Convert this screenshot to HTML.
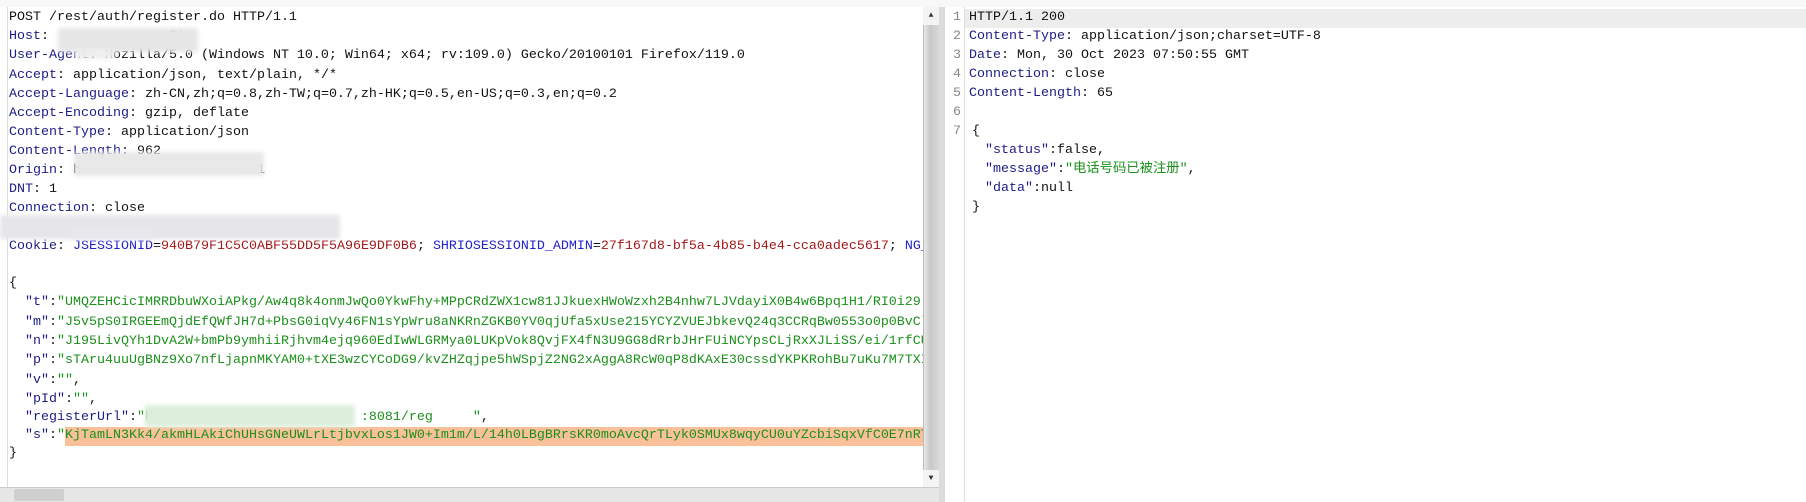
<!DOCTYPE html>
<html><head><meta charset="utf-8"><style>
*{margin:0;padding:0;box-sizing:border-box}
body{width:1806px;height:502px;background:#fff;position:relative;overflow:hidden;font-family:"Liberation Mono","Noto Sans CJK SC",monospace;font-size:13.33px;color:#111}
.l{position:absolute;white-space:pre;line-height:19px;height:19px}
.n{color:#1c1c86}.b{color:#2222cc}.r{color:#a31818}.g{color:#1c901c}
.blur{position:absolute;background:#e4e4e4;filter:blur(2px)}
.ln{position:absolute;color:#888;line-height:19px;width:10px;text-align:right}
</style></head><body>
<div style="position:absolute;left:0;top:0;width:1806px;height:7px;background:#f8f8f8"></div>
<!-- left pane -->
<div style="position:absolute;left:0;top:7px;width:923px;height:480px;overflow:hidden;background:#fff">
<div style="position:absolute;left:7px;top:0;width:1px;height:480px;background:#ddd"></div>
<div style="position:absolute;left:65px;top:420px;width:900px;height:19px;background:#f9c09a"></div>
<div style="position:absolute;left:0;top:-7px">
<div class="l" style="left:9px;top:8px">POST /rest/auth/register.do HTTP/1.1</div>
<div class="l" style="left:9px;top:27px"><span class="n">Host</span>:              :81</div>
<div class="l" style="left:9px;top:46px"><span class="n">User-Agent</span>: Mozilla/5.0 (Windows NT 10.0; Win64; x64; rv:109.0) Gecko/20100101 Firefox/119.0</div>
<div class="l" style="left:9px;top:66px"><span class="n">Accept</span>: application/json, text/plain, */*</div>
<div class="l" style="left:9px;top:85px"><span class="n">Accept-Language</span>: zh-CN,zh;q=0.8,zh-TW;q=0.7,zh-HK;q=0.5,en-US;q=0.3,en;q=0.2</div>
<div class="l" style="left:9px;top:104px"><span class="n">Accept-Encoding</span>: gzip, deflate</div>
<div class="l" style="left:9px;top:123px"><span class="n">Content-Type</span>: application/json</div>
<div class="l" style="left:9px;top:142px"><span class="n">Content-Length</span>: 962</div>
<div class="l" style="left:9px;top:161px"><span class="n">Origin</span>: h                    :81</div>
<div class="l" style="left:9px;top:180px"><span class="n">DNT</span>: 1</div>
<div class="l" style="left:9px;top:199px"><span class="n">Connection</span>: close</div>
<div class="l" style="left:9px;top:237px"><span class="n">Cookie</span>: <span class="b">JSESSIONID</span>=<span class="r">940B79F1C5C0ABF55DD5F5A96E9DF0B6</span>; <span class="b">SHRIOSESSIONID_ADMIN</span>=<span class="r">27f167d8-bf5a-4b85-b4e4-cca0adec5617</span>; <span class="b">NG_</span></div>
<div class="l" style="left:9px;top:274px">{</div>
<div class="l" style="left:9px;top:293px">  <span class="n">"t"</span>:<span class="g">"UMQZEHCicIMRRDbuWXoiAPkg/Aw4q8k4onmJwQo0YkwFhy+MPpCRdZWX1cw81JJkuexHWoWzxh2B4nhw7LJVdayiX0B4w6Bpq1H1/RI0i29</span></div>
<div class="l" style="left:9px;top:313px">  <span class="n">"m"</span>:<span class="g">"J5v5pS0IRGEEmQjdEfQWfJH7d+PbsG0iqVy46FN1sYpWru8aNKRnZGKB0YV0qjUfa5xUse215YCYZVUEJbkevQ24q3CCRqBw0553o0p0BvCl</span></div>
<div class="l" style="left:9px;top:332px">  <span class="n">"n"</span>:<span class="g">"J195LivQYh1DvA2W+bmPb9ymhiiRjhvm4ejq960EdIwWLGRMya0LUKpVok8QvjFX4fN3U9GG8dRrbJHrFUiNCYpsCLjRxXJLiSS/ei/1rfCU</span></div>
<div class="l" style="left:9px;top:351px">  <span class="n">"p"</span>:<span class="g">"sTAru4uuUgBNz9Xo7nfLjapnMKYAM0+tXE3wzCYCoDG9/kvZHZqjpe5hWSpjZ2NG2xAggA8RcW0qP8dKAxE30cssdYKPKRohBu7uKu7M7TXI</span></div>
<div class="l" style="left:9px;top:371px">  <span class="n">"v"</span>:<span class="g">""</span>,</div>
<div class="l" style="left:9px;top:390px">  <span class="n">"pId"</span>:<span class="g">""</span>,</div>
<div class="l" style="left:9px;top:408px">  <span class="n">"registerUrl"</span>:<span class="g">"h                          :8081/reg     "</span>,</div>
<div class="l" style="left:9px;top:426px">  <span class="n">"s"</span>:<span class="g">"KjTamLN3Kk4/akmHLAkiChUHsGNeUWLrLtjbvxLos1JW0+Im1m/L/14h0LBgBRrsKR0moAvcQrTLyk0SMUx8wqyCU0uYZcbiSqxVfC0E7nRT</span></div>
<div class="l" style="left:9px;top:444px">}</div>
</div>
<div class="blur" style="left:58px;top:21px;width:140px;height:24px;background:#e6e6e6"></div>
<div class="blur" style="left:75px;top:42px;width:40px;height:10px;background:#eee"></div>
<div class="blur" style="left:74px;top:145px;width:190px;height:24px;background:#e8e8e8"></div>
<div class="blur" style="left:0;top:208px;width:340px;height:24px;background:#e6e6ea"></div>
<div class="blur" style="left:72px;top:222px;width:80px;height:10px;background:#e8e8ee"></div>
<div class="blur" style="left:145px;top:398px;width:210px;height:22px;background:#dcefdc"></div>
</div>
<!-- left vscroll -->
<div style="position:absolute;left:923px;top:7px;width:16px;height:480px;background:linear-gradient(90deg,#e8e8e8,#c8c8c8 40%,#d8d8d8);border-left:1px solid #bbb"></div>
<div style="position:absolute;left:923px;top:7px;width:16px;height:18px;background:#f4f4f4;font-size:8px;text-align:center;line-height:18px;color:#333">▲</div>
<div style="position:absolute;left:923px;top:470px;width:16px;height:17px;background:#f4f4f4;font-size:8px;text-align:center;line-height:17px;color:#333">▼</div>
<!-- left hscroll -->
<div style="position:absolute;left:0;top:487px;width:939px;height:15px;background:#e6e6e6;border-top:1px solid #ccc"></div>
<div style="position:absolute;left:14px;top:489px;width:50px;height:12px;background:#cfcfcf;border-radius:2px"></div>
<div style="position:absolute;left:939px;top:7px;width:6px;height:495px;background:#dcdcdc"></div>
<!-- right pane -->
<div style="position:absolute;left:965px;top:9px;width:841px;height:19px;background:#ededed"></div>
<div style="position:absolute;left:964px;top:7px;width:1px;height:495px;background:#ddd"></div>
<div class="ln" style="left:951px;top:8px">1</div>
<div class="ln" style="left:951px;top:27px">2</div>
<div class="ln" style="left:951px;top:46px">3</div>
<div class="ln" style="left:951px;top:65px">4</div>
<div class="ln" style="left:951px;top:84px">5</div>
<div class="ln" style="left:951px;top:103px">6</div>
<div class="ln" style="left:951px;top:122px">7</div>
<div class="l" style="left:969px;top:8px">HTTP/1.1 200</div>
<div class="l" style="left:969px;top:27px"><span class="n">Content-Type</span>: application/json;charset=UTF-8</div>
<div class="l" style="left:969px;top:46px"><span class="n">Date</span>: Mon, 30 Oct 2023 07:50:55 GMT</div>
<div class="l" style="left:969px;top:65px"><span class="n">Connection</span>: close</div>
<div class="l" style="left:969px;top:84px"><span class="n">Content-Length</span>: 65</div>
<div class="l" style="left:972px;top:122px">{</div>
<div class="l" style="left:969px;top:141px">  <span class="n">"status"</span>:false,</div>
<div class="l" style="left:969px;top:160px">  <span class="n">"message"</span>:<span class="g">"电话号码已被注册"</span>,</div>
<div class="l" style="left:969px;top:179px">  <span class="n">"data"</span>:null</div>
<div class="l" style="left:972px;top:198px">}</div>
</body></html>
